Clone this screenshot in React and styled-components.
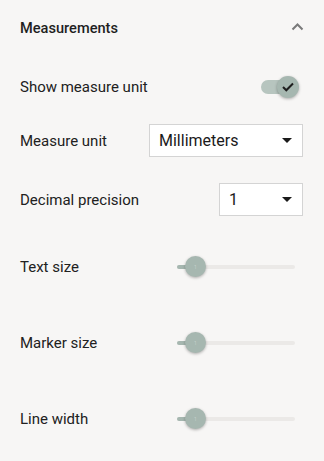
import React from 'react';
import styled, { createGlobalStyle } from 'styled-components';

const GlobalStyle = createGlobalStyle`
  html, body {
    margin: 0;
    padding: 0;
    background: #f7f6f5;
  }
  body {
    font-family: Roboto, "Liberation Sans", Arial, sans-serif;
    color: #212121;
  }
`;

const Panel = styled.section`
  width: 324px;
  height: 461px;
  padding: 0 20px;
  box-sizing: border-box;
  background: #f7f6f5;
`;

const Header = styled.div`
  display: flex;
  align-items: center;
  justify-content: space-between;
  height: 56px;
  margin-bottom: 7px;
`;

const Title = styled.h3`
  margin: 0;
  font-size: 14.6px;
  font-weight: 500;
  color: #1f1f1f;
`;

const Chevron = styled.svg`
  width: 13px;
  height: 8px;
  margin-top: -3px;
`;

const Row = styled.div`
  display: flex;
  align-items: center;
  justify-content: space-between;
  height: ${({ $h }) => $h}px;
`;

const Label = styled.span`
  font-size: 15px;
  color: #212121;
`;

const SwitchTrack = styled.div`
  position: relative;
  width: 30px;
  height: 14px;
  margin-right: 13px;
  border-radius: 7px;
  background: #b7c5bf;
`;

const SwitchThumb = styled.div`
  position: absolute;
  top: -4px;
  left: 16px;
  width: 22px;
  height: 22px;
  border-radius: 50%;
  background: #a6b7b0;
  box-shadow: 0 1px 3px rgba(0, 0, 0, 0.3);
  display: flex;
  align-items: center;
  justify-content: center;
`;

const Select = styled.div`
  display: flex;
  align-items: center;
  justify-content: space-between;
  width: ${({ $w }) => $w}px;
  height: 33px;
  margin-right: 1px;
  padding: 0 10px 0 9px;
  box-sizing: border-box;
  background: #fff;
  border: 1px solid #d4d4d4;
  font-size: 16px;
  color: #1a1a1a;
`;

const Caret = styled.span`
  width: 0;
  height: 0;
  border-left: 5px solid transparent;
  border-right: 5px solid transparent;
  border-top: 5px solid #1a1a1a;
`;

const Slider = styled.div`
  position: relative;
  width: 118px;
  height: 4px;
  margin-right: 9px;
  border-radius: 2px;
  background: #ebe9e7;
`;

const SliderFill = styled.div`
  position: absolute;
  left: 0;
  top: 0;
  height: 4px;
  border-radius: 2px;
  background: #a6b7b0;
`;

const SliderThumb = styled.div`
  position: absolute;
  top: -9px;
  width: 21px;
  height: 21px;
  margin-left: -10px;
  border-radius: 50%;
  background: #a6b7b0;
  box-shadow: 0 1px 3px rgba(0, 0, 0, 0.3);
  display: flex;
  align-items: center;
  justify-content: center;
  font-size: 5px;
  color: rgba(255, 255, 255, 0.35);
`;

function RangeRow({ label, value }) {
  const pos = 18;
  return (
    <Row $h={76}>
      <Label>{label}</Label>
      <Slider>
        <SliderFill style={{ width: pos }} />
        <SliderThumb style={{ left: pos }}>{value}</SliderThumb>
      </Slider>
    </Row>
  );
}

export default function App() {
  return (
    <>
      <GlobalStyle />
      <Panel>
        <Header>
          <Title>Measurements</Title>
          <Chevron viewBox="0 0 13 8">
            <path d="M1.5 6.5 L6.5 1.5 L11.5 6.5" fill="none" stroke="#7a7a7a" strokeWidth="2" />
          </Chevron>
        </Header>

        <Row $h={48}>
          <Label>Show measure unit</Label>
          <SwitchTrack>
            <SwitchThumb>
              <svg width="12" height="10" viewBox="0 0 12 10">
                <path d="M1 5 L4.3 8.3 L11 1.5" fill="none" stroke="#1e1e1e" strokeWidth="2" />
              </svg>
            </SwitchThumb>
          </SwitchTrack>
        </Row>

        <Row $h={59}>
          <Label>Measure unit</Label>
          <Select $w={154}>
            Millimeters
            <Caret />
          </Select>
        </Row>

        <Row $h={59}>
          <Label>Decimal precision</Label>
          <Select $w={84}>
            1
            <Caret />
          </Select>
        </Row>

        <RangeRow label="Text size" value="1" />
        <RangeRow label="Marker size" value="1" />
        <RangeRow label="Line width" value="1" />
      </Panel>
    </>
  );
}
